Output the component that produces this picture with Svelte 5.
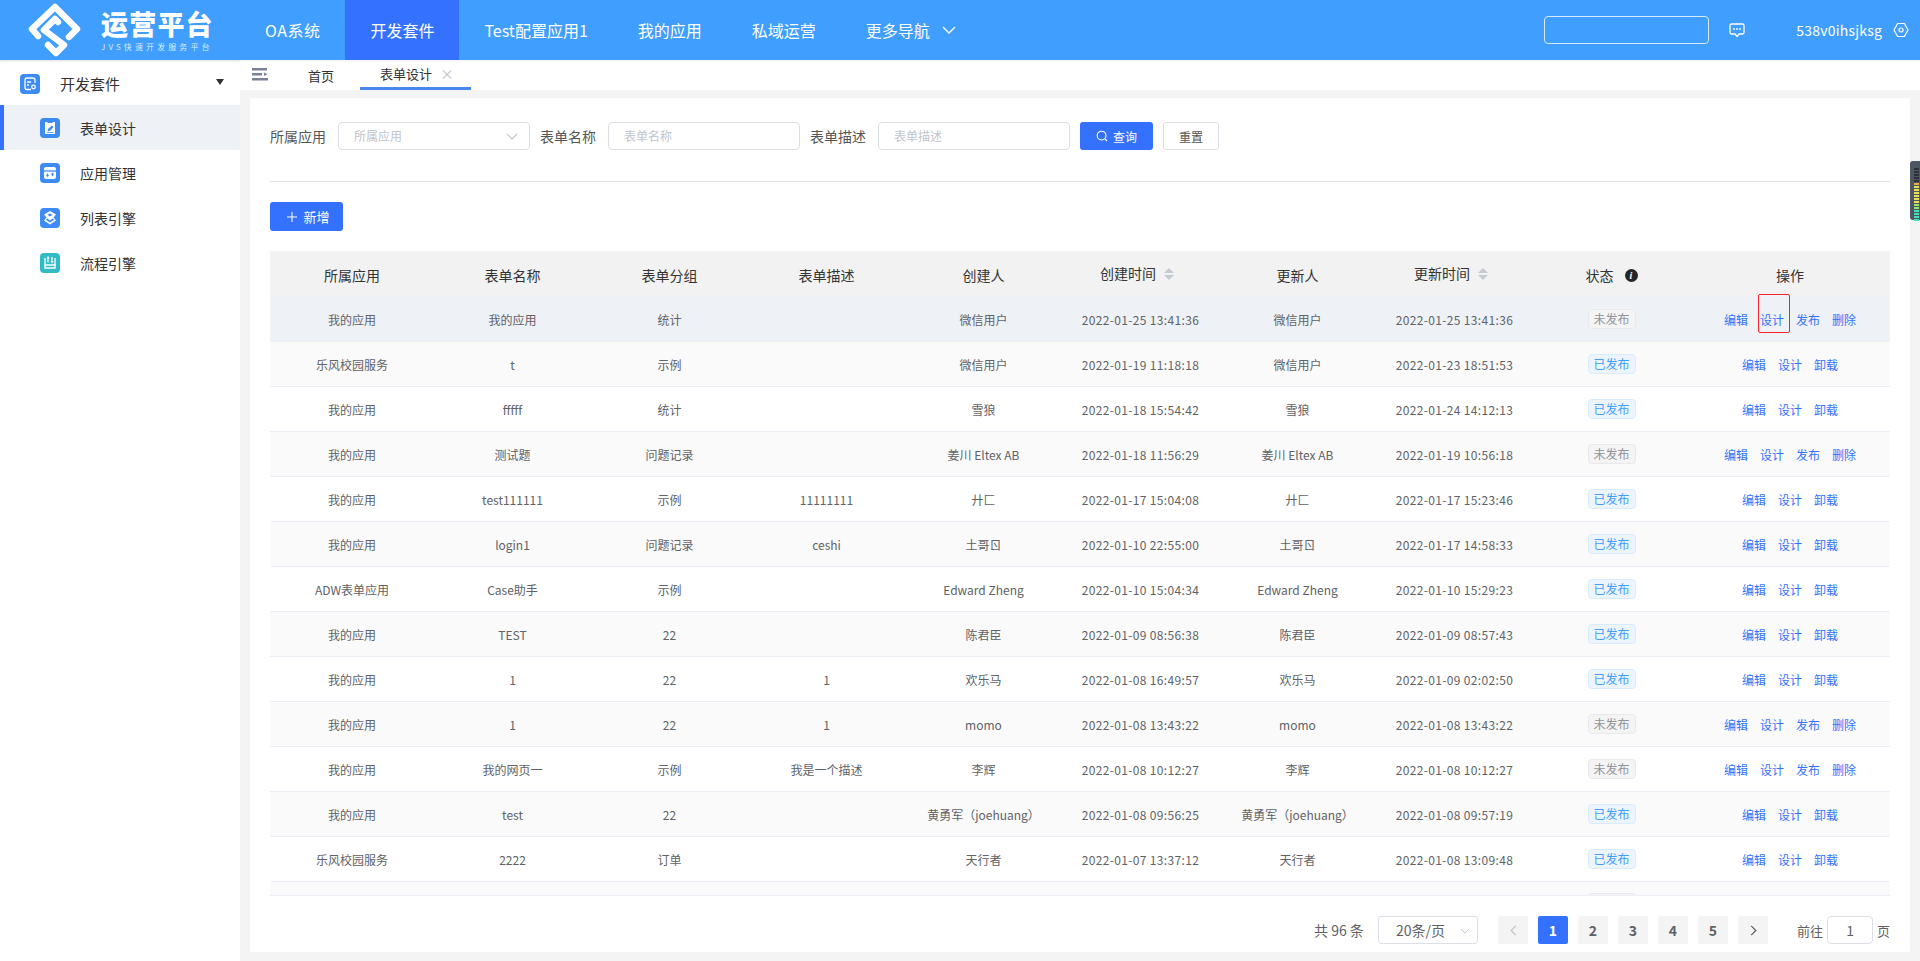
<script>
  const navItems = ['OA系统', '开发套件', 'Test配置应用1', '我的应用', '私域运营'];
  const sideItems = [
    { label: '表单设计', kind: 'form', active: true },
    { label: '应用管理', kind: 'app' },
    { label: '列表引擎', kind: 'list' },
    { label: '流程引擎', kind: 'flow' }
  ];
  const heads = [
    { t: '所属应用' }, { t: '表单名称' }, { t: '表单分组' }, { t: '表单描述' }, { t: '创建人' },
    { t: '创建时间', sort: true }, { t: '更新人' }, { t: '更新时间', sort: true }, { t: '状态', info: true }, { t: '操作' }
  ];
  const rows = [
    ['我的应用','我的应用','统计','','微信用户','2022-01-25 13:41:36','微信用户','2022-01-25 13:41:36',false],
    ['乐风校园服务','t','示例','','微信用户','2022-01-19 11:18:18','微信用户','2022-01-23 18:51:53',true],
    ['我的应用','fffff','统计','','雪狼','2022-01-18 15:54:42','雪狼','2022-01-24 14:12:13',true],
    ['我的应用','测试题','问题记录','','姜川 Eltex AB','2022-01-18 11:56:29','姜川 Eltex AB','2022-01-19 10:56:18',false],
    ['我的应用','test111111','示例','11111111','廾匚','2022-01-17 15:04:08','廾匚','2022-01-17 15:23:46',true],
    ['我的应用','login1','问题记录','ceshi','土哥ㄖ','2022-01-10 22:55:00','土哥ㄖ','2022-01-17 14:58:33',true],
    ['ADW表单应用','Case助手','示例','','Edward Zheng','2022-01-10 15:04:34','Edward Zheng','2022-01-10 15:29:23',true],
    ['我的应用','TEST','22','','陈君臣','2022-01-09 08:56:38','陈君臣','2022-01-09 08:57:43',true],
    ['我的应用','1','22','1','欢乐马','2022-01-08 16:49:57','欢乐马','2022-01-09 02:02:50',true],
    ['我的应用','1','22','1','momo','2022-01-08 13:43:22','momo','2022-01-08 13:43:22',false],
    ['我的应用','我的网页一','示例','我是一个描述','李辉','2022-01-08 10:12:27','李辉','2022-01-08 10:12:27',false],
    ['我的应用','test','22','','黄勇军（joehuang）','2022-01-08 09:56:25','黄勇军（joehuang）','2022-01-08 09:57:19',true],
    ['乐风校园服务','2222','订单','','天行者','2022-01-07 13:37:12','天行者','2022-01-08 13:09:48',true]
  ];
  const meter = ['d','d','d','d','d','o','y','y','y','y','y','y','g','g','t','t','t','t'];
</script>

<div class="page">
  <header class="top">
    <div class="logo">
      <svg class="mark" viewBox="0 0 60 60" width="60" height="60">
        <path d="M13 36 L7 29 L30 7 L52 29 L44 37" />
        <path d="M33 22 L30 19 L19 30 L39 45 L31 53 L23 45" />
      </svg>
      <div class="logotext">
        <div class="brand">运营平台</div>
        <div class="sub">JVS快速开发服务平台</div>
      </div>
    </div>
    <nav class="nav">
      {#each navItems as n, i}
        <div class="navitem" class:on={i === 1} class:first={i === 0}>{n}</div>
      {/each}
      <div class="navitem">更多导航<svg class="more" viewBox="0 0 14 8" width="14" height="8"><path d="M1 1 L7 7 L13 1" /></svg></div>
    </nav>
    <div class="topright">
      <div class="search"></div>
      <svg class="msg" viewBox="0 0 16 15" width="16" height="15">
        <path d="M2.5 1 H13.5 A1.5 1.5 0 0 1 15 2.5 V9.5 A1.5 1.5 0 0 1 13.5 11 H10 L8 13.5 L6 11 H2.5 A1.5 1.5 0 0 1 1 9.5 V2.5 A1.5 1.5 0 0 1 2.5 1 Z" />
        <circle cx="5" cy="6" r=".9" /><circle cx="8" cy="6" r=".9" /><circle cx="11" cy="6" r=".9" />
      </svg>
      <span class="user">538v0ihsjksg</span>
      <svg class="gear" viewBox="0 0 16 16" width="16" height="16">
        <path d="M4.6 1.5 H11.4 L15 8 L11.4 14.5 H4.6 L1 8 Z" /><circle cx="8" cy="8" r="2" />
      </svg>
    </div>
  </header>

  <div class="body">
    <aside class="side">
      <div class="group">
        <span class="ico blue">
          <svg viewBox="0 0 20 20" width="20" height="20">
            <path class="ln" d="M5 6 Q5 4 7 4 H13 Q15 4 15 6 V9 M11 15.5 H7 Q5 15.5 5 13.5 V6 M7 8 H11 M7 11 H9" />
            <circle class="ln" cx="13.5" cy="13" r="1.8" />
          </svg>
        </span>
        <span class="grouptext">开发套件</span>
        <span class="caret"></span>
      </div>
      {#each sideItems as s}
        <div class="sideitem" class:on={s.active}>
          <span class="ico" class:blue={s.kind !== 'flow'} class:teal={s.kind === 'flow'}>
            <svg viewBox="0 0 20 20" width="20" height="20">
              {#if s.kind === 'form'}
                <path class="wh" d="M5 4 H15 V16 H5 Z" />
                <path class="bl" d="M7.5 13.5 L8 11 L12 7.5 L13.5 9 L10 12.8 Z M7 14.2 H13.5 V15 H7 Z" />
                <path class="bl" d="M7.5 3.5 H12.5 V5 H7.5 Z" />
              {:else if s.kind === 'app'}
                <path class="wh" d="M6 4 H14 Q16 4 16 6 V14 Q16 16 14 16 H6 Q4 16 4 14 V6 Q4 4 6 4 Z" />
                <path class="ln bs" d="M4 8 H16" />
                <path class="ln bs" d="M7.5 10.5 V13 M6.5 12 L7.5 13 L8.5 12 M12.5 13 V10.5 M11.5 11.5 L12.5 10.5 L13.5 11.5" />
              {:else if s.kind === 'list'}
                <path class="wh" d="M10 3 L16 6.5 L13.5 9.5 L16 12.5 L10 16.5 L4 12.5 L6.5 9.5 L4 6.5 Z" />
                <path class="bl" d="M7.5 6.8 L10 5.5 L12.5 6.8 L10 8.6 Z M5.8 11.8 L7.2 10.4 L10 12.4 L12.8 10.4 L14.2 11.8 L10 14.6 Z" />
              {:else}
                <path class="ln" d="M5 5 V15 H15 V5" />
                <path class="ln" d="M4.5 12 H15.5 M8 4 V9.5 M7 5.5 L8 4 L9 5.5 M12 9.5 V4 M11 8 L12 9.5 L13 8" />
              {/if}
            </svg>
          </span>
          <span>{s.label}</span>
        </div>
      {/each}
    </aside>

    <main class="main">
      <div class="tabs">
        <svg class="fold" viewBox="0 0 16 13" width="16" height="13">
          <path d="M0 0 H15 V2.6 H0 Z M0 5 H10 V7.6 H0 Z M0 10 H16 V12.6 H0 Z" />
          <path d="M12 4.5 L15.5 6.3 L12 8.1 Z" />
        </svg>
        <div class="tab home">首页</div>
        <div class="tab cur">表单设计<span class="x">×</span></div>
      </div>

      <div class="wrap">
        <section class="card">
          <div class="filters">
            <span class="lab">所属应用</span>
            <div class="inp">所属应用<svg class="chev" viewBox="0 0 12 7" width="12" height="7"><path d="M1 1 L6 6 L11 1" /></svg></div>
            <span class="lab">表单名称</span>
            <div class="inp">表单名称</div>
            <span class="lab">表单描述</span>
            <div class="inp">表单描述</div>
            <button class="btn prim">
              <svg viewBox="0 0 12 12" width="12" height="12"><circle cx="5.6" cy="5.6" r="4.4" /><path d="M9 9 L11 11" /></svg>
              查询
            </button>
            <button class="btn plain">重置</button>
          </div>
          <div class="divider"></div>
          <button class="btn prim add">
            <svg viewBox="0 0 10 10" width="10" height="10"><path d="M5 0 V10 M0 5 H10" /></svg>
            新增
          </button>

          <div class="table">
            <div class="row head">
              {#each heads as h}
                <div class="cell" class:lift={h.sort}>
                  <span>{h.t}</span>
                  {#if h.sort}
                    <span class="sort"><i class="up"></i><i class="down"></i></span>
                  {/if}
                  {#if h.info}
                    <span class="info">i</span>
                  {/if}
                </div>
              {/each}
            </div>
            <div class="tbody">
              {#each rows as r, i}
                <div class="row tr" class:hover={i === 0} class:zebra={i % 2 === 1}>
                  {#each r.slice(0, 8) as c, j}
                    <div class="cell" class:date={j === 5 || j === 7}>{c}</div>
                  {/each}
                  <div class="cell">
                    <span class="tag" class:ok={r[8]}>{r[8] ? '已发布' : '未发布'}</span>
                  </div>
                  <div class="cell acts">
                    <span>编辑</span>
                    <span class:marked={i === 0}>设计</span>
                    {#if r[8]}
                      <span>卸载</span>
                    {:else}
                      <span>发布</span>
                      <span>删除</span>
                    {/if}
                  </div>
                </div>
              {/each}
              <div class="row partial">
                <div class="cell peek"><span class="tag"></span></div>
              </div>
            </div>
          </div>

          <div class="pager">
            <span class="total">共 96 条</span>
            <div class="size">20条/页<svg class="chev" viewBox="0 0 12 7" width="10" height="6"><path d="M1 1 L6 6 L11 1" /></svg></div>
            <div class="pg dis"><svg viewBox="0 0 7 12" width="7" height="11"><path d="M6 1 L1 6 L6 11" /></svg></div>
            <div class="pg cur">1</div>
            <div class="pg">2</div>
            <div class="pg">3</div>
            <div class="pg">4</div>
            <div class="pg">5</div>
            <div class="pg"><svg viewBox="0 0 7 12" width="7" height="11"><path d="M1 1 L6 6 L1 11" /></svg></div>
            <span class="goto">前往</span>
            <div class="jump">1</div>
            <span class="unit">页</span>
          </div>
        </section>
      </div>
    </main>
  </div>

  <div class="widget">
    {#each meter as m}
      <i class={m}></i>
    {/each}
  </div>
</div>

<style>
  :global(body) {
    margin: 0;
    background: #f4f4f4;
    font-family: "Noto Sans CJK SC", "Noto Sans", sans-serif;
  }
  .page {
    height: 961px;
    display: flex;
    flex-direction: column;
    overflow: hidden;
    position: relative;
  }
  .top {
    height: 60px;
    flex: none;
    background: #409eff;
    color: #fff;
    display: flex;
  }
  .logo {
    width: 240px;
    flex: none;
    display: flex;
    align-items: flex-start;
    box-sizing: border-box;
    padding-left: 25px;
    gap: 16px;
  }
  .mark { flex: none; }
  .mark path {
    fill: none;
    stroke: #fff;
    stroke-width: 6.5;
    stroke-linejoin: round;
    stroke-linecap: round;
  }
  .logotext { display: flex; flex-direction: column; }
  .brand {
    font-size: 27px;
    font-weight: 900;
    line-height: 30px;
    margin-top: 9px;
    letter-spacing: 1.2px;
    white-space: nowrap;
  }
  .sub {
    font-size: 8px;
    line-height: 10px;
    letter-spacing: 3.1px;
    margin-top: 3px;
    white-space: nowrap;
    color: #d8ebff;
  }
  .nav { display: flex; }
  .navitem {
    padding: 0 25px;
    font-size: 16px;
    line-height: 60px;
    white-space: nowrap;
    display: flex;
    align-items: center;
  }
  .navitem.first { letter-spacing: .5px; }
  .navitem.on { background: #3471ff; }
  .more { margin-left: 12px; }
  .more path { fill: none; stroke: #fff; stroke-width: 1.3; }
  .topright {
    margin-left: auto;
    display: flex;
    align-items: center;
    padding-right: 11px;
  }
  .search {
    width: 163px;
    height: 26px;
    border: 1px solid #d5e9ff;
    border-radius: 4px;
  }
  .msg { margin-left: 20px; }
  .msg path { fill: none; stroke: #fff; stroke-width: 1.3; }
  .msg circle { fill: #fff; }
  .user { margin-left: 51px; font-size: 14px; letter-spacing: .2px; }
  .gear { margin-left: 11px; }
  .gear path, .gear circle { fill: none; stroke: #fff; stroke-width: 1.2; }

  .body { flex: 1; display: flex; min-height: 0; }
  .side {
    width: 240px;
    flex: none;
    background: #fff;
    color: #333;
    box-shadow: inset 0 3px 3px -2px rgba(0, 0, 0, .12);
  }
  .group {
    height: 45px;
    box-sizing: border-box;
    display: flex;
    align-items: center;
    padding: 2px 0 0 20px;
    font-size: 15px;
    position: relative;
  }
  .grouptext { margin-left: 20px; }
  .caret {
    position: absolute;
    left: 216px;
    top: 19px;
    border: 4.5px solid transparent;
    border-top: 6px solid #303133;
    border-bottom: 0;
  }
  .ico {
    width: 20px;
    height: 20px;
    border-radius: 4px;
    display: block;
    flex: none;
  }
  .ico svg { display: block; }
  .blue { background: #3c8bf6; }
  .teal { background: #2fbcc4; }
  .wh { fill: #fff; }
  .bl { fill: #3c8bf6; }
  .ln { fill: none; stroke: #fff; stroke-width: 1.3; }
  .ln.bs { stroke: #3c8bf6; }
  .sideitem {
    height: 45px;
    display: flex;
    align-items: center;
    gap: 20px;
    padding-left: 40px;
    font-size: 14px;
    box-sizing: border-box;
  }
  .sideitem.on {
    background: #eef1f6;
    border-left: 4px solid #3471ff;
    padding-left: 36px;
  }

  .main { flex: 1; display: flex; flex-direction: column; min-width: 0; }
  .tabs {
    height: 30px;
    flex: none;
    background: #fff;
    display: flex;
    position: relative;
    box-shadow: inset 0 3px 3px -2px rgba(0, 0, 0, .06);
    color: #333;
    font-size: 13px;
  }
  .fold { margin: 8px 0 0 12px; fill: #7a8299; flex: none; }
  .tab { line-height: 30px; white-space: nowrap; }
  .home { margin-left: 27px; width: 52px; text-align: center; margin-top: 1px; }
  .tab.cur {
    width: 111px;
    height: 30px;
    box-sizing: border-box;
    padding-left: 20px;
    border-bottom: 3px solid #4a86f0;
    line-height: 27px;
    margin-left: 13px;
  }
  .x { color: #c0c4cc; margin-left: 8px; font-size: 14px; }

  .wrap { flex: 1; padding: 8px 10px 9px; min-height: 0; display: flex; }
  .card {
    flex: 1;
    background: #fff;
    padding: 24px 20px 0;
    min-width: 0;
    box-sizing: border-box;
  }
  .filters { display: flex; align-items: center; height: 28px; }
  .lab {
    font-size: 14px;
    color: #555;
    margin-right: 12px;
    white-space: nowrap;
  }
  .inp {
    width: 192px;
    height: 28px;
    box-sizing: border-box;
    border: 1px solid #dcdfe6;
    border-radius: 4px;
    margin-right: 10px;
    padding-left: 15px;
    font-size: 12px;
    line-height: 26px;
    color: #c0c4cc;
    position: relative;
  }
  .chev { position: absolute; right: 11px; top: 10px; }
  .chev path { fill: none; stroke: #c0c4cc; stroke-width: 1.1; }
  .btn {
    height: 28px;
    box-sizing: border-box;
    border-radius: 3px;
    font: inherit;
    font-size: 12px;
    padding: 0;
    display: flex;
    align-items: center;
    justify-content: center;
    gap: 5px;
  }
  .prim { background: #3471ff; color: #fff; border: 0; width: 73px; }
  .prim svg { fill: none; stroke: #fff; stroke-width: 1.1; flex: none; }
  .plain {
    width: 56px;
    background: #fff;
    color: #555;
    border: 1px solid #dcdfe6;
    margin-left: 10px;
  }
  .divider { height: 1px; background: #dfe1e6; margin-top: 31px; }
  .add { height: 29px; margin-top: 20px; gap: 6px; font-size: 13px; padding-left: 4px; }

  .table { margin-top: 20px; }
  .row {
    display: grid;
    grid-template-columns: 164px repeat(8, 157px) 200px;
  }
  .head { background: #f2f2f2; height: 46px; color: #333; font-size: 14px; }
  .head .cell { padding-top: 2px; box-sizing: border-box; }
  .head .cell.lift { padding: 0 7px 2px 0; }
  .cell {
    display: flex;
    align-items: center;
    justify-content: center;
    white-space: nowrap;
  }
  .tbody { border-bottom: 1px solid #ebeef5; }
  .tr {
    height: 45px;
    box-sizing: border-box;
    border-bottom: 1px solid #ebeef5;
    font-size: 12px;
    color: #606266;
    background: #fff;
  }
  .tr.zebra { background: #fafafa; }
  .tr.hover { background: #eef1f6; }
  .date { letter-spacing: .35px; }
  .partial {
    height: 13px;
    background: #fafafa;
    overflow: hidden;
  }
  .peek {
    grid-column: 9;
    align-items: flex-start;
    padding-top: 11px;
  }
  .sort {
    display: inline-flex;
    flex-direction: column;
    gap: 2px;
    margin-left: 8px;
    margin-top: 2px;
  }
  .sort i {
    display: block;
    width: 0;
    height: 0;
    border-left: 5px solid transparent;
    border-right: 5px solid transparent;
  }
  .up { border-bottom: 5px solid #c6cad2; }
  .down { border-top: 5px solid #c6cad2; }
  .info {
    width: 13px;
    height: 13px;
    border-radius: 50%;
    background: #262626;
    color: #fff;
    font: italic 700 10px/13px "Liberation Serif", serif;
    text-align: center;
    margin-left: 11px;
  }
  .tag {
    width: 48px;
    height: 20px;
    box-sizing: border-box;
    border: 1px solid #e9e9eb;
    background: #f4f4f5;
    color: #909399;
    border-radius: 4px;
    text-align: center;
    line-height: 18px;
    flex: none;
  }
  .tag.ok { background: #ecf5ff; border-color: #d9ecff; color: #409eff; }
  .acts { gap: 12px; color: #3471ff; }
  .marked { position: relative; }
  .marked::after {
    content: "";
    position: absolute;
    left: -2px;
    right: -6px;
    top: -17px;
    bottom: -5px;
    border: 1px solid #f5222d;
    border-radius: 2px;
    pointer-events: none;
  }

  .pager {
    display: flex;
    align-items: center;
    margin-top: 20px;
    height: 28px;
    font-size: 14px;
    color: #606266;
    padding-left: 1044px;
  }
  .total { width: 64px; white-space: nowrap; }
  .size {
    width: 100px;
    height: 28px;
    box-sizing: border-box;
    border: 1px solid #dcdfe6;
    border-radius: 3px;
    padding-left: 17px;
    line-height: 26px;
    position: relative;
    margin-right: 20px;
    white-space: nowrap;
  }
  .size .chev { right: 7px; top: 11px; }
  .pg {
    width: 30px;
    height: 28px;
    background: #f4f4f5;
    border-radius: 2px;
    margin-right: 10px;
    font-weight: 700;
    display: flex;
    align-items: center;
    justify-content: center;
  }
  .pg.cur { background: #3471ff; color: #fff; }
  .pg svg { fill: none; stroke: #606266; stroke-width: 1.4; }
  .pg.dis svg { stroke: #c0c4cc; }
  .goto { margin-left: 19px; white-space: nowrap; font-size: 13px; }
  .jump {
    width: 46px;
    height: 28px;
    box-sizing: border-box;
    border: 1px solid #dcdfe6;
    border-radius: 4px;
    margin-left: 4px;
    text-align: center;
    line-height: 26px;
  }
  .unit { margin-left: 4px; white-space: nowrap; font-size: 13px; }

  .widget {
    position: absolute;
    left: 1910px;
    top: 161px;
    width: 10px;
    height: 59px;
    box-sizing: border-box;
    background: #4f5663;
    border-radius: 3px 0 0 3px;
    padding: 7px 0 0 4px;
    display: flex;
    flex-direction: column;
    gap: 1px;
  }
  .widget i { display: block; width: 5px; height: 2px; flex: none; }
  .widget .d { background: #2b303a; }
  .widget .o { background: #f1a73a; }
  .widget .y { background: #e8e050; }
  .widget .g { background: #9ee66a; }
  .widget .t { background: #45e0b8; }
</style>
